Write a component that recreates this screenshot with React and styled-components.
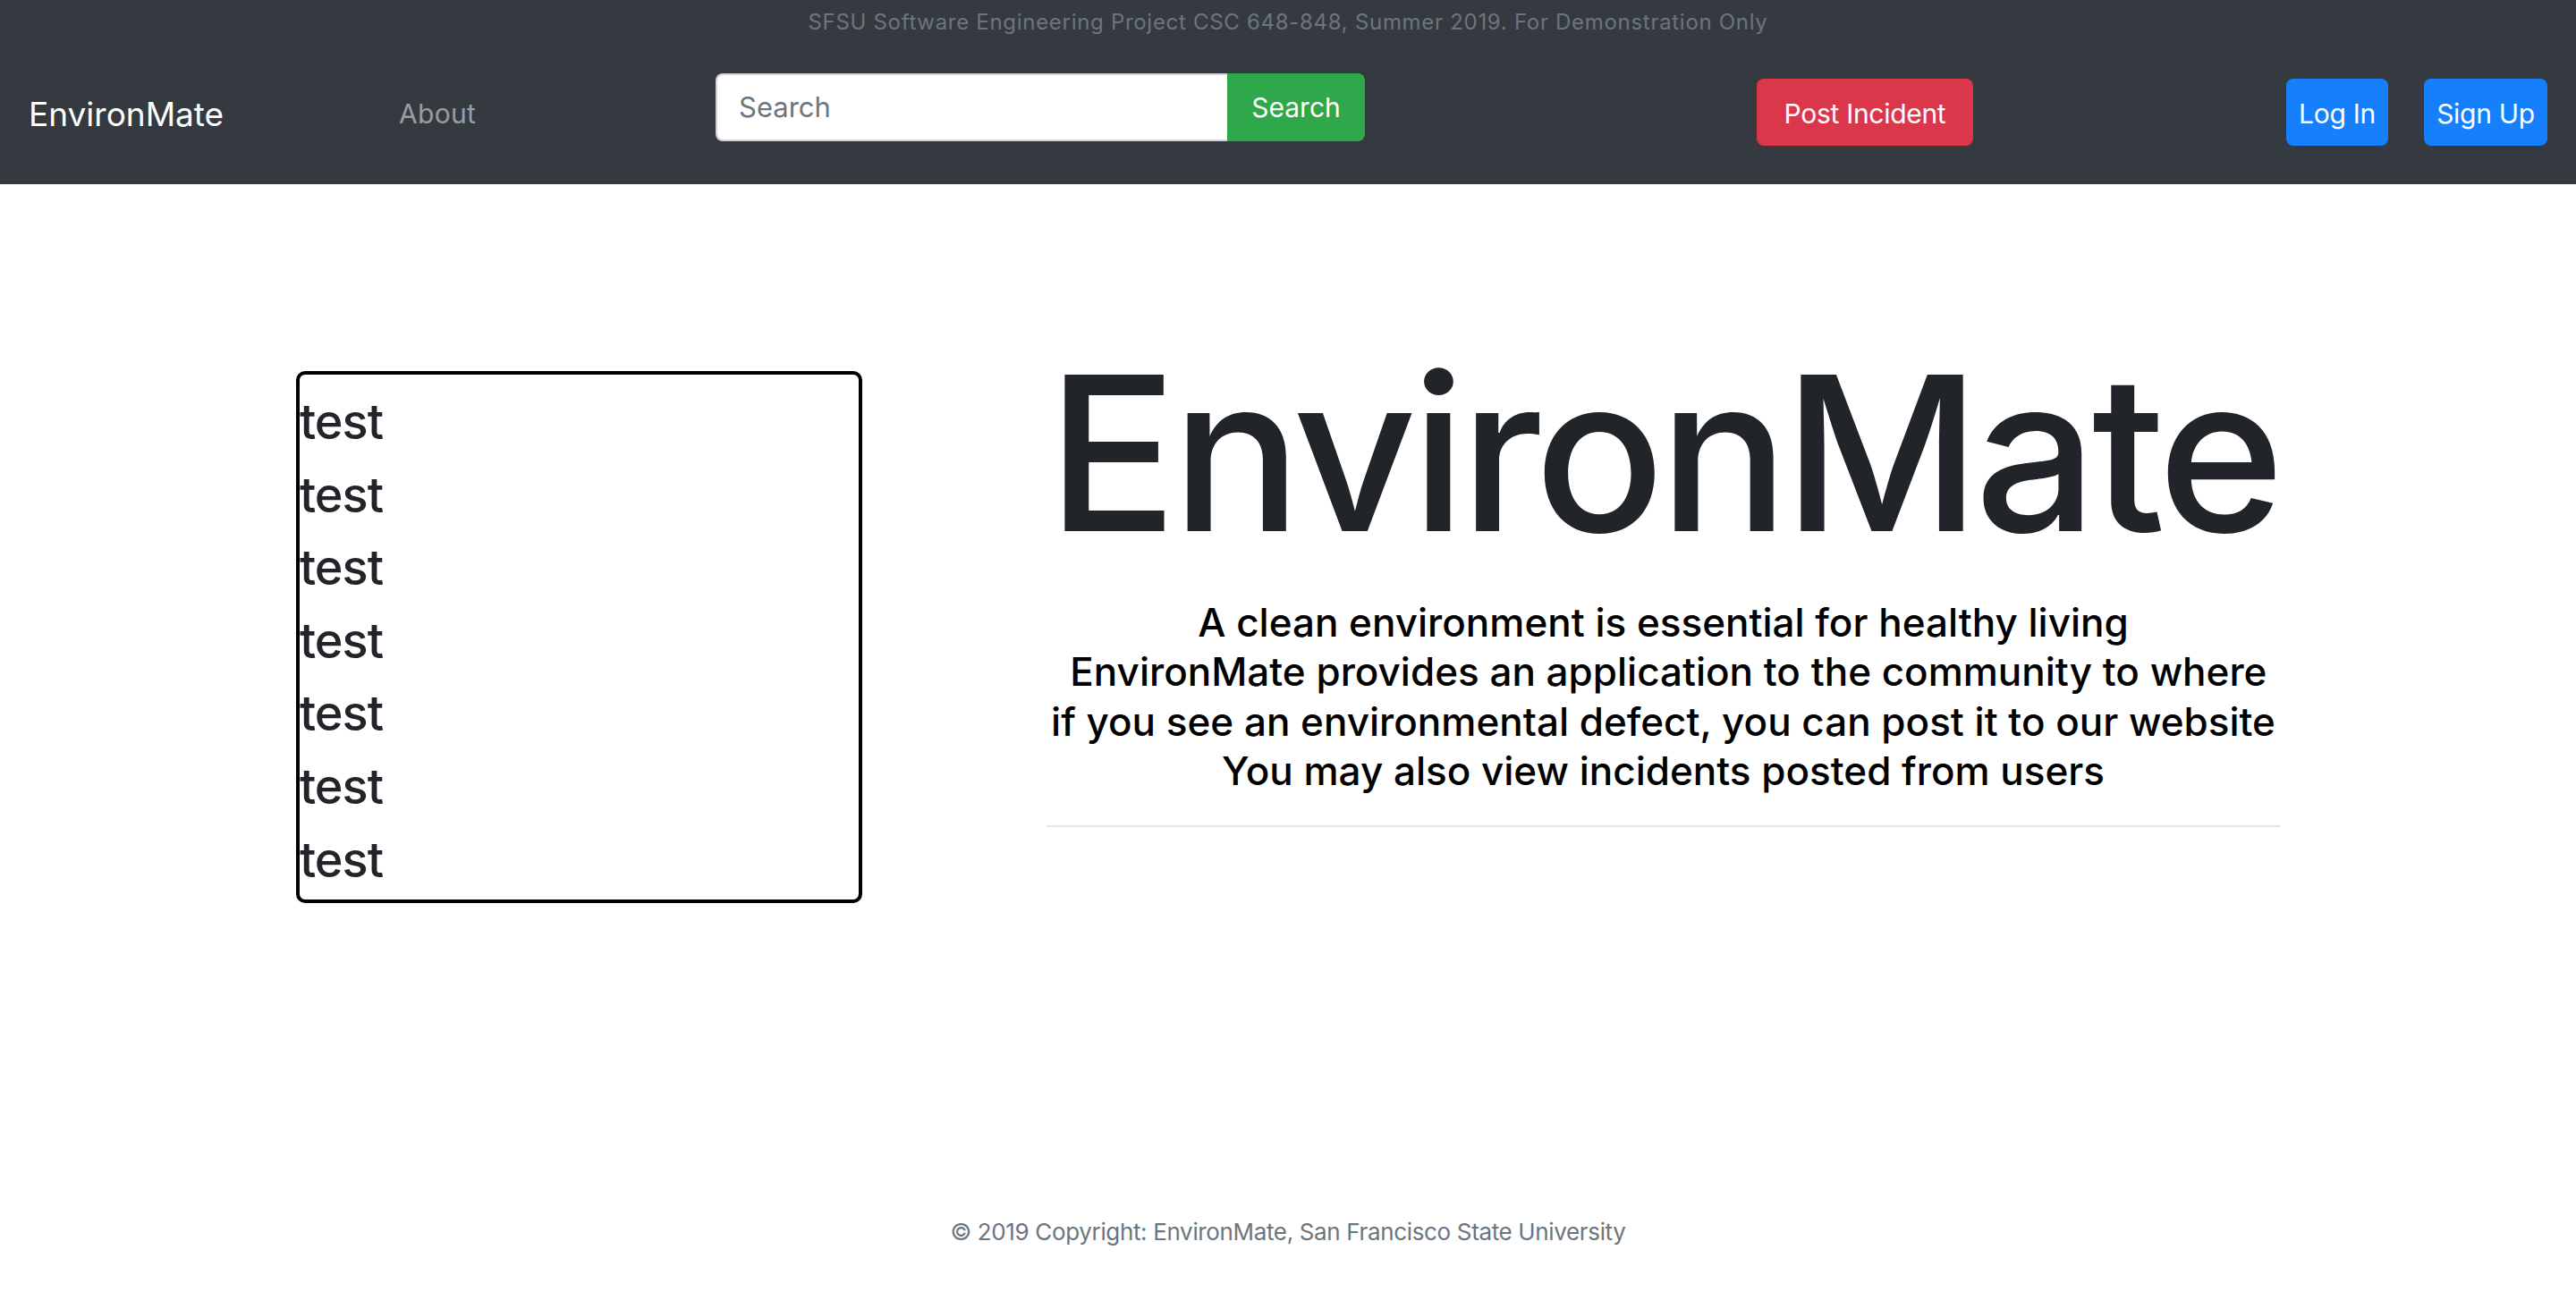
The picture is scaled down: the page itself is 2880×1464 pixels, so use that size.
import React from "react";
import styled, { createGlobalStyle } from "styled-components";

const Global = createGlobalStyle`
  html, body { margin: 0; padding: 0; background: #fff; }
  body { font-family: Inter, "Noto Sans", "Liberation Sans", sans-serif; color: #212529; }
  * { box-sizing: border-box; }
`;

const Page = styled.div`
  min-height: 100vh;
  display: flex;
  flex-direction: column;
`;

const Header = styled.header`
  background: #353a41;
  height: 206px;
  display: flex;
  flex-direction: column;
`;

const TopNote = styled.div`
  height: 48px;
  padding-top: 7px;
  text-align: center;
  font-size: 24px;
  letter-spacing: 0.7px;
  line-height: 36px;
  color: #6c757d;
`;

const NavRow = styled.nav`
  height: 158px;
  display: flex;
  align-items: center;
  padding: 0 32px;
`;

const Brand = styled.a`
  width: 414px;
  flex-shrink: 0;
  font-size: 37px;
  color: #fff;
  text-decoration: none;
`;

const NavLink = styled.a`
  width: 354px;
  flex-shrink: 0;
  font-size: 30px;
  letter-spacing: 0.3px;
  color: rgba(255, 255, 255, 0.5);
  text-decoration: none;
`;

const SearchForm = styled.form`
  display: flex;
  margin-bottom: 15px;
  flex-shrink: 0;
`;

const SearchInput = styled.input`
  width: 572px;
  height: 76px;
  border: 2px solid #ced4da;
  border-right: none;
  border-radius: 8px 0 0 8px;
  padding: 0 24px;
  font-family: inherit;
  font-size: 31px;
  color: #495057;
  background: #fff;
  outline: none;
  &::placeholder { color: #6c757d; }
`;

const Button = styled.button`
  width: ${(p) => p.$w}px;
  height: ${(p) => p.$h || 75}px;
  flex-shrink: 0;
  border: none;
  border-radius: ${(p) => (p.$joined ? "0 8px 8px 0" : "8px")};
  background: ${(p) => p.$bg};
  color: #fff;
  font-family: inherit;
  font-size: 30px;
  letter-spacing: ${(p) => (p.$joined ? "0" : "-0.3px")};
  padding: ${(p) => (p.$joined ? "0" : "3px 0 0")};
  margin-left: ${(p) => p.$ml || "0"};
  margin-bottom: ${(p) => (p.$joined ? "0" : "3px")};
  cursor: pointer;
`;

const Main = styled.main`
  flex: 1;
  display: grid;
  grid-template-columns: 633px 1379px;
  column-gap: 206px;
  align-items: start;
  padding: 148px 0 0 331px;
`;

const ListBox = styled.div`
  margin-top: 61px;
  height: 595px;
  border: 4px solid #000;
  border-radius: 10px;
  padding: 19px 0 11px;
  display: flex;
  flex-direction: column;
  gap: 14.4px;
`;

const ListItem = styled.div`
  font-size: 54px;
  font-weight: 500;
  letter-spacing: -1px;
  line-height: 67.2px;
  color: #212529;
`;

const Hero = styled.section`
  display: flex;
  flex-direction: column;
  align-items: center;
`;

const Title = styled.h1`
  margin: 3px 0 0;
  font-size: 241px;
  font-weight: 550;
  letter-spacing: -6px;
  line-height: 300px;
  color: #212529;
  white-space: nowrap;
`;

const Tagline = styled.div`
  margin-top: 12px;
  display: flex;
  flex-direction: column;
  align-items: center;
`;

const TagLine = styled.div`
  font-size: 44px;
  font-weight: 500;
  line-height: 55.3px;
  color: #000;
  white-space: pre;
`;

const Rule = styled.hr`
  align-self: stretch;
  margin: 33px 0 0;
  border: none;
  border-top: 2px solid rgba(0, 0, 0, 0.1);
`;

const Footer = styled.footer`
  text-align: center;
  font-size: 26px;
  letter-spacing: -0.35px;
  line-height: 42px;
  color: #6c757d;
  padding-bottom: 65px;
`;

const lines = [
  "A clean environment is essential for healthy living",
  " EnvironMate provides an application to the community to where",
  "if you see an environmental defect, you can post it to our website",
  "You may also view incidents posted from users",
];

export default function App() {
  return (
    <Page>
      <Global />
      <Header>
        <TopNote>
          SFSU Software Engineering Project CSC 648-848, Summer 2019. For Demonstration Only
        </TopNote>
        <NavRow>
          <Brand href="#">EnvironMate</Brand>
          <NavLink href="#">About</NavLink>
          <SearchForm onSubmit={(e) => e.preventDefault()}>
            <SearchInput placeholder="Search" />
            <Button $w={154} $h={76} $bg="#2ea84b" $joined>
              Search
            </Button>
          </SearchForm>
          <Button $w={242} $bg="#db374a" $ml="438px">
            Post Incident
          </Button>
          <Button $w={114} $bg="#167ffb" $ml="auto">
            Log In
          </Button>
          <Button $w={138} $bg="#167ffb" $ml="40px">
            Sign Up
          </Button>
        </NavRow>
      </Header>
      <Main>
        <ListBox>
          {Array.from({ length: 7 }).map((_, i) => (
            <ListItem key={i}>test</ListItem>
          ))}
        </ListBox>
        <Hero>
          <Title>EnvironMate</Title>
          <Tagline>
            {lines.map((l, i) => (
              <TagLine key={i}>{l}</TagLine>
            ))}
          </Tagline>
          <Rule />
        </Hero>
      </Main>
      <Footer>© 2019 Copyright: EnvironMate, San Francisco State University</Footer>
    </Page>
  );
}
